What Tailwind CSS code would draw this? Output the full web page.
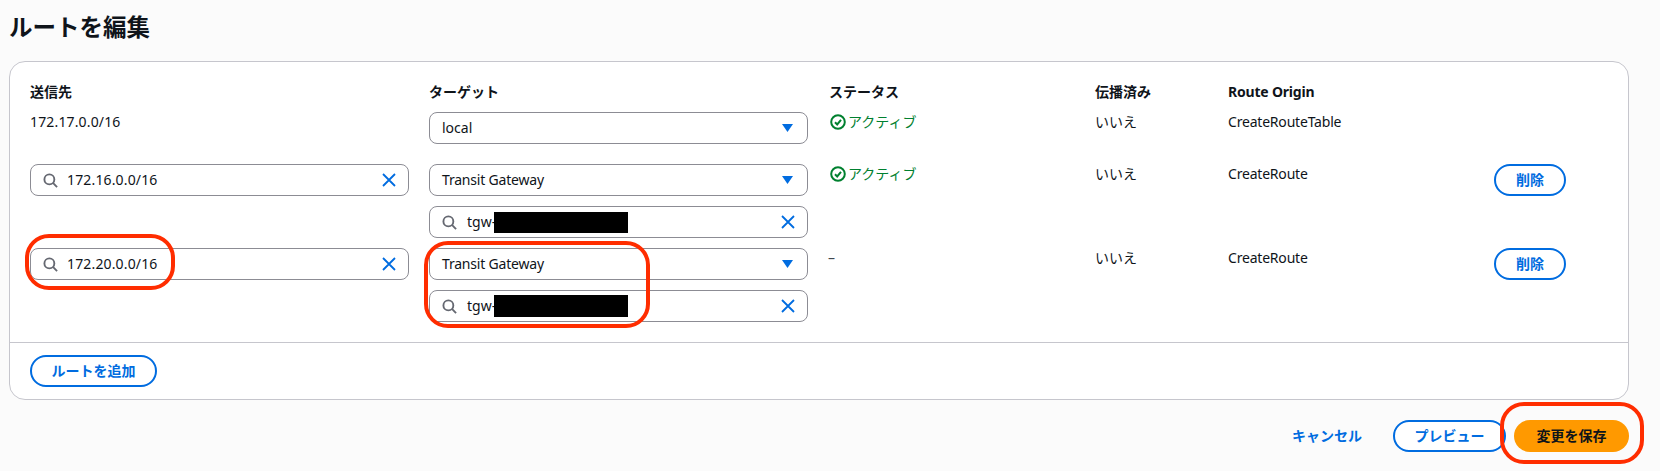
<!DOCTYPE html>
<html lang="ja">
<head>
<meta charset="utf-8">
<title>ルートを編集</title>
<script src="https://cdn.jsdelivr.net/npm/@tailwindcss/browser@4"></script>
</head>
<body class="m-0 h-[471px] w-[1660px] overflow-hidden bg-[#fbfbfb] font-['Noto_Sans','Noto_Sans_CJK_JP',sans-serif] text-[14px] leading-[20px] text-[#0f141a]">
<div class="relative h-[471px] w-[1660px] overflow-hidden">
  <h1 class="h-[61px] pl-[9px] pt-[10px] text-[23.5px] font-bold leading-[34px]">ルートを編集</h1>

  <section class="ml-[9px] h-[339px] w-[1620px] rounded-[16px] border border-[#c6c6cd] bg-white">
    <div class="flex h-[280px] flex-col pl-[20px] pt-[20px]">
      <div class="grid grid-cols-[379px_379px_247px_113px_246px_72px] gap-x-[20px] font-bold">
        <div>送信先</div><div>ターゲット</div><div class="pl-[1px]">ステータス</div><div>伝播済み</div><div class="tracking-[-0.2px]">Route Origin</div><div></div>
      </div>

      <div class="mt-[10px] grid grid-cols-[379px_379px_247px_113px_246px_72px] gap-x-[20px]">
        <div class="tracking-[0.15px]">172.17.0.0/16</div>
        <div class="flex h-[32px] items-center justify-between rounded-[8px] border border-[#8c8c94] bg-white pl-[12px] pr-[14px]">
          <span>local</span>
          <svg class="h-[8px] w-[11px]" viewBox="0 0 11 8"><path d="M0 0H11L5.5 8Z" fill="#006ce0"/></svg>
        </div>
        <div class="flex items-start gap-[2px] pl-[2px] text-[#00802f]">
          <svg class="mt-[2px] h-[16px] w-[16px]" viewBox="0 0 16 16" fill="none" stroke="#00802f" stroke-width="2"><circle cx="8" cy="8" r="6.8"/><path d="M5 8.2 7.2 10.4 11 5.8"/></svg>
          <span>アクティブ</span>
        </div>
        <div>いいえ</div>
        <div class="tracking-[-0.2px]">CreateRouteTable</div>
        <div></div>
      </div>

      <div class="mt-[20px] grid grid-cols-[379px_379px_247px_113px_246px_72px] gap-x-[20px]">
        <div class="flex h-[32px] items-center rounded-[8px] border border-[#8c8c94] bg-white pl-[12px] pr-[12px]">
          <svg class="h-[15px] w-[15px] shrink-0" viewBox="0 0 16 16" fill="none" stroke="#656871" stroke-width="2"><circle cx="6.8" cy="6.8" r="5.3"/><path d="M10.6 10.6 15 15"/></svg>
          <span class="ml-[9px] flex-1 tracking-[0.15px]">172.16.0.0/16</span>
          <svg class="h-[14px] w-[14px]" viewBox="0 0 14 14" fill="none" stroke="#006ce0" stroke-width="1.8"><path d="M1 1 13 13M13 1 1 13"/></svg>
        </div>
        <div class="flex flex-col gap-[10px]">
          <div class="flex h-[32px] items-center justify-between rounded-[8px] border border-[#8c8c94] bg-white pl-[12px] pr-[14px]">
            <span class="tracking-[-0.2px]">Transit Gateway</span>
            <svg class="h-[8px] w-[11px]" viewBox="0 0 11 8"><path d="M0 0H11L5.5 8Z" fill="#006ce0"/></svg>
          </div>
          <div class="flex h-[32px] items-center rounded-[8px] border border-[#8c8c94] bg-white pl-[12px] pr-[12px]">
            <svg class="h-[15px] w-[15px] shrink-0" viewBox="0 0 16 16" fill="none" stroke="#656871" stroke-width="2"><circle cx="6.8" cy="6.8" r="5.3"/><path d="M10.6 10.6 15 15"/></svg>
            <span class="ml-[10px] w-[27px] shrink-0">tgw-</span>
            <span class="h-[21px] w-[134px] bg-black"></span>
            <span class="flex-1"></span>
            <svg class="h-[14px] w-[14px]" viewBox="0 0 14 14" fill="none" stroke="#006ce0" stroke-width="1.8"><path d="M1 1 13 13M13 1 1 13"/></svg>
          </div>
        </div>
        <div class="flex items-start gap-[2px] pl-[2px] text-[#00802f]">
          <svg class="mt-[2px] h-[16px] w-[16px]" viewBox="0 0 16 16" fill="none" stroke="#00802f" stroke-width="2"><circle cx="8" cy="8" r="6.8"/><path d="M5 8.2 7.2 10.4 11 5.8"/></svg>
          <span>アクティブ</span>
        </div>
        <div>いいえ</div>
        <div class="tracking-[-0.2px]">CreateRoute</div>
        <div><button class="flex h-[32px] w-[72px] items-center justify-center rounded-full border-2 border-[#006ce0] bg-white font-semibold text-[#006ce0]">削除</button></div>
      </div>

      <div class="mt-[10px] grid grid-cols-[379px_379px_247px_113px_246px_72px] gap-x-[20px]">
        <div class="flex h-[32px] items-center rounded-[8px] border border-[#8c8c94] bg-white pl-[12px] pr-[12px]">
          <svg class="h-[15px] w-[15px] shrink-0" viewBox="0 0 16 16" fill="none" stroke="#656871" stroke-width="2"><circle cx="6.8" cy="6.8" r="5.3"/><path d="M10.6 10.6 15 15"/></svg>
          <span class="ml-[9px] flex-1 tracking-[0.15px]">172.20.0.0/16</span>
          <svg class="h-[14px] w-[14px]" viewBox="0 0 14 14" fill="none" stroke="#006ce0" stroke-width="1.8"><path d="M1 1 13 13M13 1 1 13"/></svg>
        </div>
        <div class="flex flex-col gap-[10px]">
          <div class="flex h-[32px] items-center justify-between rounded-[8px] border border-[#8c8c94] bg-white pl-[12px] pr-[14px]">
            <span class="tracking-[-0.2px]">Transit Gateway</span>
            <svg class="h-[8px] w-[11px]" viewBox="0 0 11 8"><path d="M0 0H11L5.5 8Z" fill="#006ce0"/></svg>
          </div>
          <div class="flex h-[32px] items-center rounded-[8px] border border-[#8c8c94] bg-white pl-[12px] pr-[12px]">
            <svg class="h-[15px] w-[15px] shrink-0" viewBox="0 0 16 16" fill="none" stroke="#656871" stroke-width="2"><circle cx="6.8" cy="6.8" r="5.3"/><path d="M10.6 10.6 15 15"/></svg>
            <span class="ml-[10px] w-[27px] shrink-0">tgw-</span>
            <span class="h-[22px] w-[134px] bg-black"></span>
            <span class="flex-1"></span>
            <svg class="h-[14px] w-[14px]" viewBox="0 0 14 14" fill="none" stroke="#006ce0" stroke-width="1.8"><path d="M1 1 13 13M13 1 1 13"/></svg>
          </div>
        </div>
        <div class="text-[#414750]">–</div>
        <div>いいえ</div>
        <div class="tracking-[-0.2px]">CreateRoute</div>
        <div><button class="flex h-[32px] w-[72px] items-center justify-center rounded-full border-2 border-[#006ce0] bg-white font-semibold text-[#006ce0]">削除</button></div>
      </div>
    </div>

    <div class="border-t border-[#c6c6cd] pl-[20px] pt-[12px]">
      <button class="flex h-[32px] w-[127px] items-center justify-center rounded-full border-2 border-[#006ce0] bg-white font-semibold text-[#006ce0]">ルートを追加</button>
    </div>
  </section>

  <div class="mt-[20px] flex w-[1629px] items-center justify-end">
    <button class="mr-[31px] font-semibold text-[#006ce0]">キャンセル</button>
    <button class="mr-[8px] flex h-[32px] w-[113px] items-center justify-center rounded-full border-2 border-[#006ce0] bg-white font-semibold text-[#006ce0]">プレビュー</button>
    <button class="flex h-[32px] w-[115px] items-center justify-center rounded-full bg-[#ff9900] font-semibold text-[#0f141a]">変更を保存</button>
  </div>

  <div class="pointer-events-none absolute left-[25px] top-[234px] h-[56px] w-[150px] rounded-[24px] border-[4px] border-[#ff2d00]"></div>
  <div class="pointer-events-none absolute left-[424px] top-[241px] h-[87px] w-[226px] rounded-[24px] border-[4px] border-[#ff2d00]"></div>
  <div class="pointer-events-none absolute left-[1500px] top-[402px] h-[62px] w-[144px] rounded-[24px] border-[4px] border-[#ff2d00]"></div>
</div>
</body>
</html>
